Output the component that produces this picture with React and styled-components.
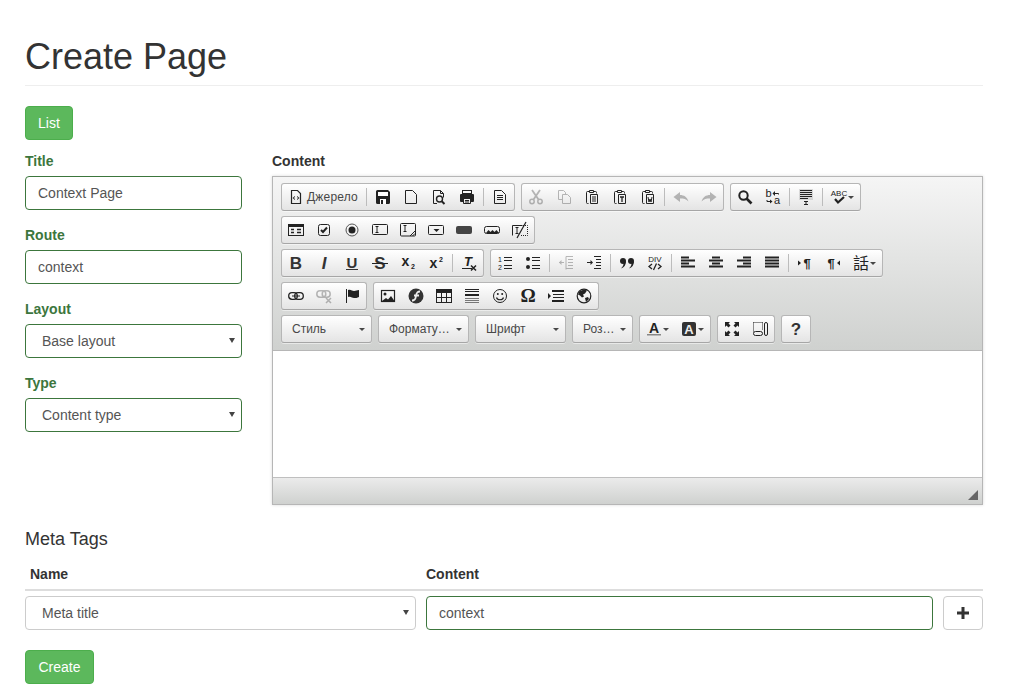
import React from 'react';
import styled, { createGlobalStyle } from 'styled-components';

const Global = createGlobalStyle`
  * { box-sizing: border-box; }
  html, body { margin: 0; padding: 0; background: #fff; }
  body { font-family: "Liberation Sans", Arial, sans-serif; font-size: 14px; line-height: 20px; color: #333; }
`;

const Page = styled.div`
  width: 1012px;
  height: 690px;
  padding: 38px 29px 0 25px;
  overflow: hidden;
`;
const Header = styled.div`
  border-bottom: 1px solid #eee;
  padding-bottom: 9px;
  margin-bottom: 20px;
`;
const Title = styled.h1`
  margin: 0;
  font-size: 36px;
  line-height: 38px;
  font-weight: 500;
  color: #333;
`;
const Green = styled.button`
  display: block;
  height: 34px;
  padding: 0 12px;
  border: 1px solid #4cae4c;
  border-radius: 4px;
  background: #5cb85c;
  color: #fff;
  font: 14px "Liberation Sans", Arial, sans-serif;
`;
const Columns = styled.div`
  display: grid;
  grid-template-columns: 217px 711px;
  column-gap: 30px;
  margin-top: 11px;
`;
const Field = styled.div`
  margin-bottom: 15px;
`;
const Label = styled.label`
  display: block;
  font-weight: 700;
  margin-bottom: 5px;
  color: ${p => (p.$ok ? '#3c763d' : '#333')};
`;
const TextInput = styled.input`
  display: block;
  width: 100%;
  height: 34px;
  padding: 6px 12px;
  border: 1px solid #3c763d;
  border-radius: 4px;
  background: #fff;
  color: #555;
  font: 14px "Liberation Sans", Arial, sans-serif;
  outline: none;
`;
const SelectWrap = styled.div`
  position: relative;
  &::after {
    content: "";
    position: absolute;
    right: 7px;
    top: 14px;
    width: 0;
    height: 0;
    border-left: 3px solid transparent;
    border-right: 3px solid transparent;
    border-top: 5px solid #444;
    pointer-events: none;
  }
`;
const Select = styled.select`
  display: block;
  width: 100%;
  height: 34px;
  padding: 6px 12px 6px 16px;
  appearance: none;
  border: 1px solid ${p => (p.$ok ? '#3c763d' : '#ccc')};
  border-radius: 4px;
  background: #fff;
  color: #555;
  font: 14px "Liberation Sans", Arial, sans-serif;
  outline: none;
`;

/* editor */
const Editor = styled.div`
  height: 329px;
  border: 1px solid #b6b6b6;
  box-shadow: 0 0 3px rgba(0, 0, 0, .15);
  display: flex;
  flex-direction: column;
`;
const Top = styled.div`
  padding: 6px 8px 2px;
  border-bottom: 1px solid #b6b6b6;
  background: linear-gradient(to bottom, #f5f5f5, #cfd1cf);
`;
const Row = styled.div`
  display: flex;
  gap: 6px;
  margin-bottom: 5px;
`;
const Group = styled.div`
  display: flex;
  height: 28px;
  border: 1px solid #b6b6b6;
  border-bottom-color: #a6a6a6;
  border-radius: 3px;
  background: linear-gradient(to bottom, #fff, #e4e4e4);
  box-shadow: 0 1px 0 rgba(255, 255, 255, .5);
`;
const Btn = styled.span`
  display: flex;
  align-items: center;
  height: 26px;
  padding: 0 6px;
  flex: none;
  color: #474747;
  font-size: 12px;
`;
const Sep = styled.span`
  width: 1px;
  height: 18px;
  margin: 4px 2px 0;
  background: #bcbcbc;
  flex: none;
`;
const BtnLabel = styled.span`
  display: block;
  width: 51px;
  margin-left: 3px;
  line-height: 16px;
  letter-spacing: .2px;
  white-space: nowrap;
`;
const Caret = styled.span`
  width: 0;
  height: 0;
  margin-left: 1px;
  border-left: 3px solid transparent;
  border-right: 3px solid transparent;
  border-top: 3px solid #474747;
  flex: none;
`;
const Combo = styled.div`
  display: flex;
  align-items: center;
  justify-content: space-between;
  width: ${p => p.$w}px;
  height: 28px;
  padding: 0 6px 0 10px;
  border: 1px solid #b6b6b6;
  border-bottom-color: #a6a6a6;
  border-radius: 3px;
  background: linear-gradient(to bottom, #fff, #e4e4e4);
  box-shadow: 0 1px 0 rgba(255, 255, 255, .5);
  color: #484848;
  font-size: 12px;
`;
const Content = styled.div`
  flex: 1;
  background: #fff;
`;
const Bottom = styled.div`
  height: 27px;
  flex: none;
  display: flex;
  justify-content: flex-end;
  align-items: flex-end;
  padding: 0 4px 4px 0;
  border-top: 1px solid #bfbfbf;
  background: linear-gradient(to bottom, #ebebeb, #cfd1cf);
`;
const Svg = styled.svg`
  display: block;
  flex: none;
  overflow: visible;
  opacity: ${p => (p.$off ? 0.3 : 1)};
  font-family: "Liberation Sans", Arial, sans-serif;
`;

/* meta */
const MetaTitle = styled.h4`
  margin: 24px 0 0;
  font-size: 18px;
  line-height: 20px;
  font-weight: 500;
  color: #333;
`;
const MetaHead = styled.div`
  display: grid;
  grid-template-columns: 391px 1fr;
  column-gap: 10px;
  margin-top: 15px;
  padding-left: 5px;
  height: 27px;
  border-bottom: 2px solid #ddd;
  font-weight: 700;
`;
const MetaHeadCell = styled.div`
  margin-left: ${p => p.$shift || 0}px;
`;
const MetaRow = styled.div`
  display: grid;
  grid-template-columns: 391px 507px 40px;
  column-gap: 10px;
  margin-top: 5px;
`;
const Plus = styled.button`
  height: 34px;
  padding: 0;
  border: 1px solid #ccc;
  border-radius: 4px;
  background: #fff;
  display: flex;
  align-items: center;
  justify-content: center;
`;
const CreateBtn = styled(Green)`
  margin-top: 20px;
  padding: 0 12.5px;
`;

const D = '#222';
const L = ({ d, w = 1, c = D }) => <path d={d} fill="none" stroke={c} strokeWidth={w} />;
const F = ({ d, c = D }) => <path d={d} fill={c} />;
const T = ({ x, y, s, b, i, f, c = D, children }) => (
  <text x={x} y={y} fontSize={s} fontFamily={f} fontWeight={b ? 700 : 400} fontStyle={i ? 'italic' : 'normal'} textAnchor="middle" fill={c}>{children}</text>
);
const clipShape = <L d="M6 2.500H3.500a1 1 0 0 0-1 1v10a1 1 0 0 0 1 1h1 M9 2.500h2.500a1 1 0 0 1 1 1v1 M5.500 1.500h4v2h-4z" />;

const icons = {
  source: <><L d="M3.500 1.500h6l3 3v10h-9z" w={1.200} /><F d="M7 7v1L5.800 9 7 10v1L4.500 9z M9 7v1l1.200 1L9 10v1l2.500-2z" /></>,
  save: <><path d="M2.500 1h10.500l2 2v10.500a1.500 1.500 0 0 1-1.500 1.500h-11a1.500 1.500 0 0 1-1.500-1.500v-11a1.500 1.500 0 0 1 1.500-1.500z" fill={D} /><rect x="3" y="3" width="10" height="4" fill="#fff" /><rect x="5" y="10" width="6" height="5" fill="#fff" /><rect x="6" y="11" width="2" height="4" fill={D} /></>,
  newpage: <L d="M2.500 1.500h7l4 4v9h-11z" />,
  preview: <><L d="M2.500 1.500h7l3 3v4 M6 14.500h-3.500v-13 M9.500 1.500v3h3" /><circle cx="8.500" cy="10" r="3" fill="none" stroke={D} strokeWidth="1.400" /><L d="M10.500 12l3 3" w={2} /></>,
  print: <><rect x="3.500" y="1.500" width="9" height="3" fill="none" stroke={D} /><F d="M2 5h12a1 1 0 0 1 1 1v6a1 1 0 0 1-1 1h-2v-3H4v3H2a1 1 0 0 1-1-1V6a1 1 0 0 1 1-1z" /><L d="M4.500 9.500h7v5h-7z M6 11.500h4 M6 13h4" /></>,
  templates: <><L d="M2.500 1.500h7l4 4v9h-11z" /><L d="M5 6.500h6 M5 8.500h6 M5 10.500h6" /></>,
  cut: <><circle cx="4" cy="12.500" r="2.200" fill="none" stroke={D} strokeWidth="1.500" /><circle cx="12" cy="12.500" r="2.200" fill="none" stroke={D} strokeWidth="1.500" /><L d="M4 1l6.500 9.500 M12 1L5.500 10.500" w={1.800} /></>,
  copy: <><L d="M2.500 1.500h5l2 2v2 M6 10.500h-3.500v-9" /><L d="M6.500 5.500h5l3 3v6h-8z" /></>,
  paste: <>{clipShape}<L d="M6.500 5.500h7v9h-7z M8 8h4 M8 10h4 M8 12h4" /></>,
  pastetext: <>{clipShape}<L d="M6.500 5.500h7v9h-7z" /><L d="M8 8h4 M10 8v5" w={1.300} /></>,
  pasteword: <>{clipShape}<L d="M6.500 5.500h7v9h-7z" /><L d="M8 8l1 5 1-3 1 3 1-5" /></>,
  undo: <F d="M0.500 8L7 3v3c4 0 7 2 8.500 6.500C13 10 11 9.500 7 9.500V13z" />,
  redo: <F d="M15.500 8L9 3v3c-4 0-7 2-8.500 6.500C3 10 5 9.500 9 9.500V13z" />,
  find: <><circle cx="6.500" cy="6.500" r="4.200" fill="none" stroke={D} strokeWidth="2" /><L d="M9.500 9.500l5 5" w={2.600} /></>,
  replace: <><T x="3.500" y="8" s={11}>b</T><T x="12" y="15" s={11}>a</T><L d="M9 4.500h4.500v1" /><F d="M10 2v5L7.500 4.500z" /><L d="M2 11v1.500h3.500" /><F d="M5 10.500v4l2.500-2z" /></>,
  selectall: <><rect x="1" y="0" width="14" height="11" fill="#bbb" opacity=".5" /><L d="M2 1.500h12 M2 3.500h12 M2 5.500h12 M2 7.500h12 M2 9.500h8" /><L d="M6 12.500h4 M6 15.500h4 M8 12.500v3" /></>,
  spell: <><T x="8" y="7" s={8}>ABC</T><L d="M4 10l3 3.500 6-5.500" w={2.200} /></>,
  form: <><rect x="0.500" y="2.500" width="15" height="11" fill="none" stroke={D} /><rect x="1" y="3" width="14" height="2" fill={D} /><L d="M3 7.500h3 M9 7.500h4 M3 10.500h3 M9 10.500h4" w={1.500} /></>,
  checkbox: <><rect x="2.500" y="2.500" width="11" height="11" rx="2" fill="none" stroke={D} /><L d="M5 8l2 2 4-4.500" w={2} /></>,
  radio: <><circle cx="8" cy="8" r="6" fill="none" stroke="#555" /><circle cx="8" cy="8" r="3.500" fill={D} /></>,
  textfield: <><rect x="0.500" y="2.500" width="15" height="10" rx="1" fill="none" stroke={D} /><L d="M3.500 4.500h3 M3.500 10.500h3 M5 4.500v6" /></>,
  textarea: <><rect x="0.500" y="1.500" width="15" height="12.500" rx="1" fill="none" stroke={D} /><L d="M3.500 3.500h3 M3.500 9.500h3 M5 3.500v6" /><L d="M10 14l5-5 M12.500 14l2.500-2.500" /></>,
  select: <><rect x="0.500" y="3.500" width="15" height="9" rx="1" fill="none" stroke={D} /><F d="M5.500 7h6L8.500 10z" /></>,
  button: <rect x="0" y="4" width="16" height="8" rx="2" fill="#444" />,
  imagebutton: <><rect x="0.500" y="4.500" width="15" height="7" rx="2" fill="none" stroke={D} /><F d="M2 11l2.500-3 2 2 2-2 2 2 2-2L15 11z" /></>,
  hidden: <><L d="M0.500 13.500v-10h10" /><path d="M11 3.500h4.500v10H9" fill="none" stroke={D} strokeDasharray="1 1" /><L d="M3.500 5.500h3 M3.500 11.500h3 M5 5.500v6" /><L d="M5 16L14 0" w={1.200} /></>,
  bold: <T x="8" y="14" s={17} b c="#333">B</T>,
  italic: <T x="8" y="14" s={17} b i c="#333">I</T>,
  underline: <><T x="8" y="12.500" s={15} b c="#333">U</T><rect x="2" y="14" width="12" height="1" fill="#333" /></>,
  strike: <><T x="8" y="14" s={17} b c="#333">S</T><rect x="0" y="8" width="16" height="1" fill="#222" /></>,
  sub: <><T x="5.500" y="11" s={14} b>x</T><T x="13" y="14" s={7} b>2</T></>,
  sup: <><T x="5.500" y="13" s={14} b>x</T><T x="13" y="7" s={7} b>2</T></>,
  removeformat: <><T x="7" y="11" s={13} b i>T</T><rect x="1" y="13" width="10" height="1" fill={D} /><L d="M10 10.500l5 5 M15 10.500l-5 5" w={1.500} /></>,
  numbered: <><T x="3" y="7" s={7}>1</T><T x="3" y="15" s={7}>2</T><L d="M7 2.500h8 M7 5.500h8 M7 10.500h8 M7 13.500h8" /></>,
  bulleted: <><circle cx="3" cy="4" r="2" fill={D} /><circle cx="3" cy="12" r="2" fill={D} /><L d="M7 2.500h8 M7 5.500h8 M7 10.500h8 M7 13.500h8" /></>,
  outdent: <><L d="M8 1.500h7 M10 4.500h5 M10 7.500h5 M10 10.500h5 M8 13.500h7 M8 1.500v13" /><L d="M1 7.500h5" /><F d="M1 7.500l2.500-2.500v5z" /></>,
  indent: <><L d="M8 1.500h7 M10 4.500h5 M10 7.500h5 M10 10.500h5 M8 13.500h7" /><L d="M1 7.500h5" /><F d="M7 7.500l-2.500-2.500v5z" /></>,
  quote: <><circle cx="4" cy="6" r="3" fill={D} /><circle cx="12" cy="6" r="3" fill={D} /><F d="M4.500 8.500L7 6c0 4-2 6.500-5 7.500 1.500-1.500 2.500-3 2.500-5z" /><F d="M12.500 8.500L15 6c0 4-2 6.500-5 7.500 1.500-1.500 2.500-3 2.500-5z" /></>,
  div: <><T x="8" y="6.500" s={8}>DIV</T><L d="M5 9l-3 2.500 3 2.500 M11 9l3 2.500-3 2.500 M9.500 8.500l-3 6.500" w={1.300} /></>,
  left: <L d="M1 2.500h8 M1 5.500h14 M1 8.500h8 M1 11.500h14" w={2} />,
  center: <L d="M4 2.500h8 M1 5.500h14 M4 8.500h8 M1 11.500h14" w={2} />,
  right: <L d="M7 2.500h8 M1 5.500h14 M7 8.500h8 M1 11.500h14" w={2} />,
  justify: <L d="M1 2.500h14 M1 5.500h14 M1 8.500h14 M1 11.500h14" w={2} />,
  ltr: <><F d="M1 5.500l3 2.500-3 2.500z" /><T x="10" y="13" s={13} b>¶</T></>,
  rtl: <><T x="6" y="13" s={13} b>¶</T><F d="M15 5.500l-3 2.500 3 2.500z" /></>,
  lang: <T x="8" y="14" s={16} f='"Noto Sans CJK TC", sans-serif'>話</T>,
  link: <><rect x="0.700" y="4.700" width="8.600" height="6.600" rx="3.300" fill="none" stroke={D} strokeWidth="1.300" /><rect x="6.700" y="4.700" width="8.600" height="6.600" rx="3.300" fill="none" stroke={D} strokeWidth="1.300" /><L d="M4 8h8" /></>,
  unlink: <><rect x="0.800" y="2.800" width="9" height="6.400" rx="3.200" fill="none" stroke={D} strokeWidth="1.500" /><rect x="6.200" y="2.800" width="8" height="6.400" rx="3.200" fill="none" stroke={D} strokeWidth="1.500" /><L d="M10 10l5 5 M15 10l-5 5" w={1.500} /></>,
  anchor: <><rect x="2" y="1" width="1" height="14" fill={D} /><F d="M4 2c3-1 4 1 6 1s3-1 5-1v7c-2 1-3 1-5 1S7 8 4 9z" /></>,
  image: <><rect x="1.500" y="2.500" width="13" height="11" fill="none" stroke={D} strokeWidth="1.200" /><circle cx="5" cy="6" r="1.500" fill={D} /><F d="M2 13l4-3 2 1.500L11 8l3.500 5z" /></>,
  flash: <><circle cx="8" cy="8" r="7.500" fill="#333" /><L d="M12 3.500C9 3.500 8.500 5 8 8s-1 4.500-4 4.500 M6 7.500h5" w={1.800} c="#eee" /></>,
  table: <><rect x="0.500" y="1.500" width="15" height="13" fill="none" stroke={D} /><rect x="1" y="2" width="14" height="3" fill={D} /><L d="M5.500 5v9 M10.500 5v9 M1 9.500h14" /></>,
  hr: <><L d="M1 1.500h14 M1 3.500h14" /><rect x="1" y="6" width="14" height="2" fill={D} /><L d="M1 10.500h14 M1 12.500h14 M1 14.500h14" c="#777" /></>,
  smiley: <><circle cx="8" cy="8" r="6.500" fill="none" stroke={D} /><circle cx="5.800" cy="6" r="1" fill={D} /><circle cx="10.200" cy="6" r="1" fill={D} /><L d="M4.500 9.500c1 3 6 3 7 0" w={1.200} /></>,
  omega: <T x="8" y="14" s={19} b f='"Liberation Serif", serif'>Ω</T>,
  pagebreak: <><F d="M0 5l3 3-3 3z" /><rect x="4" y="2" width="12" height="2" fill={D} /><rect x="5" y="6" width="11" height="1" fill={D} /><rect x="5" y="9" width="11" height="1" fill={D} /><rect x="4" y="12" width="12" height="2" fill={D} /></>,
  iframe: <><circle cx="8" cy="8" r="6.800" fill="none" stroke={D} strokeWidth="1.200" /><F d="M3 3.500l5-2 3 1-2 3-2 1 1 2-2 1-2-2-2-1z M9 10l3-1 1 2-3 3z" /></>,
  textcolor: <><T x="8" y="11.500" s={14} b>A</T><rect x="1" y="13" width="14" height="1.500" fill="#888" /></>,
  bgcolor: <><rect x="1" y="1" width="14" height="14" rx="2" fill="#333" /><T x="8" y="13" s={13} b c="#eee">A</T></>,
  maximize: <><F d="M1 1h5L4.500 2.500 6.500 4.500 4.500 6.500 2.500 4.500 1 6z" /><F d="M15 1h-5l1.500 1.500L9.500 4.500l2 2 2-2L15 6z" /><F d="M1 15h5l-1.500-1.500 2-2-2-2-2 2L1 10z" /><F d="M15 15h-5l1.500-1.500-2-2 2-2 2 2L15 10z" /></>,
  showblocks: <><path d="M1.500 1.500h9" stroke={D} fill="none" strokeDasharray="1 1" /><path d="M1.500 1.500v9" stroke={D} fill="none" strokeDasharray="1 1" /><path d="M10.500 1.500v8" stroke={D} fill="none" strokeDasharray="1 1" /><rect x="1.500" y="10.500" width="9" height="4" rx="2" fill="none" stroke={D} /><rect x="12.500" y="1.500" width="3" height="13" rx="1.500" fill="none" stroke={D} /></>,
  about: <T x="8" y="14" s={17} b c="#333">?</T>,
};

const Icon = ({ name, off }) => (
  <Svg $off={off} width="16" height="16" viewBox="0 0 16 16">{icons[name]}</Svg>
);

const S = 'sep';
const toolbar = [
  [
    [{ n: 'source', label: 'Джерело' }, S, 'save', 'newpage', 'preview', 'print', S, 'templates'],
    ['-cut', '-copy', 'paste', 'pastetext', 'pasteword', S, '-undo', '-redo'],
    ['find', 'replace', S, 'selectall', S, { n: 'spell', caret: true }],
  ],
  [['form', 'checkbox', 'radio', 'textfield', 'textarea', 'select', 'button', 'imagebutton', 'hidden']],
  [
    ['bold', 'italic', 'underline', 'strike', 'sub', 'sup', S, 'removeformat'],
    ['numbered', 'bulleted', S, '-outdent', 'indent', S, 'quote', 'div', S, 'left', 'center', 'right', 'justify', S, 'ltr', 'rtl', { n: 'lang', caret: true }],
  ],
  [
    ['link', '-unlink', 'anchor'],
    ['image', 'flash', 'table', 'hr', 'smiley', 'omega', 'pagebreak', 'iframe'],
  ],
];

const renderItem = (it, i) => {
  if (it === S) return <Sep key={i} />;
  if (typeof it === 'string') {
    const off = it[0] === '-';
    return <Btn key={i}><Icon name={off ? it.slice(1) : it} off={off} /></Btn>;
  }
  return (
    <Btn key={i}>
      <Icon name={it.n} />
      {it.label && <BtnLabel>{it.label}</BtnLabel>}
      {it.caret && <Caret />}
    </Btn>
  );
};

const combos = [['Стиль', 91], ['Формату…', 91], ['Шрифт', 91], ['Роз…', 61]];

export default function App() {
  return (
    <Page>
      <Global />
      <Header><Title>Create Page</Title></Header>
      <Green>List</Green>
      <Columns>
        <div>
          <Field>
            <Label $ok>Title</Label>
            <TextInput defaultValue="Context Page" />
          </Field>
          <Field>
            <Label $ok>Route</Label>
            <TextInput defaultValue="context" />
          </Field>
          <Field>
            <Label $ok>Layout</Label>
            <SelectWrap><Select $ok><option>Base layout</option></Select></SelectWrap>
          </Field>
          <Field>
            <Label $ok>Type</Label>
            <SelectWrap><Select $ok><option>Content type</option></Select></SelectWrap>
          </Field>
        </div>
        <div>
          <Label>Content</Label>
          <Editor>
            <Top>
              {toolbar.map((row, r) => (
                <Row key={r}>
                  {row.map((g, k) => <Group key={k}>{g.map(renderItem)}</Group>)}
                </Row>
              ))}
              <Row>
                {combos.map(([t, w]) => <Combo key={t} $w={w}><span>{t}</span><Caret /></Combo>)}
                <Group>
                  <Btn><Icon name="textcolor" /><Caret /></Btn>
                  <Btn><Icon name="bgcolor" /><Caret /></Btn>
                </Group>
                <Group>
                  <Btn><Icon name="maximize" /></Btn>
                  <Btn><Icon name="showblocks" /></Btn>
                </Group>
                <Group><Btn><Icon name="about" /></Btn></Group>
              </Row>
            </Top>
            <Content />
            <Bottom>
              <Svg width="10" height="10" viewBox="0 0 10 10"><path d="M10 0v10H0z" fill="#666" /></Svg>
            </Bottom>
          </Editor>
        </div>
      </Columns>
      <MetaTitle>Meta Tags</MetaTitle>
      <MetaHead>
        <MetaHeadCell>Name</MetaHeadCell>
        <MetaHeadCell $shift={-5}>Content</MetaHeadCell>
      </MetaHead>
      <MetaRow>
        <SelectWrap><Select><option>Meta title</option></Select></SelectWrap>
        <TextInput defaultValue="context" />
        <Plus>
          <Svg width="14" height="14" viewBox="0 0 14 14"><path d="M5.500 1h3v4.500H13v3H8.500V13h-3V8.500H1v-3h4.500z" fill="#333" /></Svg>
        </Plus>
      </MetaRow>
      <CreateBtn>Create</CreateBtn>
    </Page>
  );
}
